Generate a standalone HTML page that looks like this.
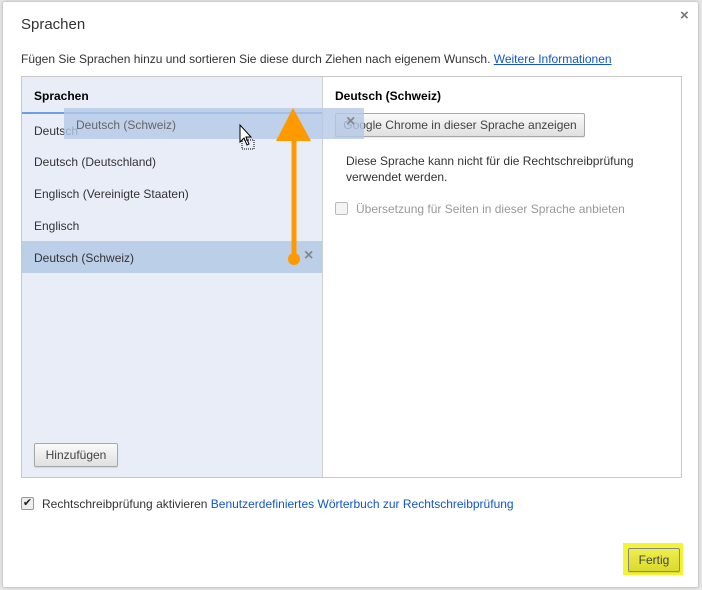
<!DOCTYPE html>
<html><head><meta charset="utf-8"><style>
body{margin:0;width:702px;height:590px;background:#e6e6e6;font-family:"Liberation Sans",sans-serif;font-size:12px;color:#333;position:relative;overflow:hidden}
.dlg{position:absolute;left:3px;top:2px;width:695px;height:585px;background:#fff;border-radius:2px;box-shadow:0 0 3px rgba(0,0,0,.3)}
.a{position:absolute;white-space:nowrap}
a{color:#1155cc}
.btn{position:absolute;border:1px solid #a8a8a8;border-radius:2px;background:linear-gradient(#fafafa,#e0e0e0);box-shadow:0 1px 1px rgba(0,0,0,.1);font-size:12px;color:#444;text-align:center}
</style></head><body>
<div class="dlg"></div>
<div class="a" style="left:21px;top:16px;font-size:15px;color:#333">Sprachen</div>
<div class="a" style="left:680px;top:7px;font-size:15px;color:#777;font-weight:bold">×</div>
<div class="a" style="left:21px;top:52px">Fügen Sie Sprachen hinzu und sortieren Sie diese durch Ziehen nach eigenem Wunsch. <a style="text-decoration:underline">Weitere Informationen</a></div>
<div style="position:absolute;left:21px;top:76px;width:659px;height:400px;border:1px solid #c8c8c8;background:#fff"></div>
<div style="position:absolute;left:22px;top:77px;width:300px;height:400px;background:#e8edf8;border-right:1px solid #d0d0d0"></div>
<div class="a" style="left:34px;top:89px;font-weight:bold;color:#000">Sprachen</div>
<div class="a" style="left:34px;top:124px">Deutsch</div>
<div class="a" style="left:34px;top:155px">Deutsch (Deutschland)</div>
<div class="a" style="left:34px;top:187px">Englisch (Vereinigte Staaten)</div>
<div class="a" style="left:34px;top:219px">Englisch</div>
<div style="position:absolute;left:22px;top:241px;width:300px;height:32px;background:#bccfe8"></div>
<div class="a" style="left:34px;top:251px">Deutsch (Schweiz)</div>
<div class="a" style="left:304px;top:247px;font-size:16px;color:#888;font-weight:bold">×</div>
<div style="position:absolute;left:22px;top:112px;width:300px;height:2px;background:#6f9de0"></div>
<div class="a" style="left:335px;top:89px;font-weight:bold;color:#000">Deutsch (Schweiz)</div>
<div class="btn" style="left:335px;top:113px;width:248px;height:22px;line-height:22px">Google Chrome in dieser Sprache anzeigen</div>
<div style="position:absolute;left:64px;top:108px;width:300px;height:31px;background:rgba(180,200,230,.8)"></div>
<div class="a" style="left:76px;top:118px;color:#666">Deutsch (Schweiz)</div>
<div class="a" style="left:346px;top:113px;font-size:16px;color:#888;font-weight:bold">×</div>
<div class="a" style="left:346px;top:153px;line-height:16px">Diese Sprache kann nicht für die Rechtschreibprüfung<br>verwendet werden.</div>
<div style="position:absolute;left:335px;top:202px;width:11px;height:11px;border:1px solid #bbb;border-radius:2px;background:#f4f4f4"></div>
<div class="a" style="left:356px;top:202px;color:#999">Übersetzung für Seiten in dieser Sprache anbieten</div>
<svg style="position:absolute;left:0;top:0" width="702" height="590"><path d="M294 260 L294 140" stroke="#f90" stroke-width="5"/><path d="M276 141 L293 108 L311 141Z" fill="#f90"/><circle cx="294" cy="259" r="6" fill="#f90"/>
<path d="M240 125 L240 142 L244 138 L247 145 L249 144 L246 137 L251 137Z" fill="#fff" stroke="#000" stroke-width="1"/>
<rect x="242" y="140" width="12" height="9" fill="none" stroke="#000" stroke-dasharray="1 1"/></svg>
<div class="btn" style="left:34px;top:443px;width:82px;height:22px;line-height:22px">Hinzufügen</div>
<div style="position:absolute;left:21px;top:497px;width:11px;height:11px;border:1px solid #999;border-radius:2px;background:#eee;font-size:11px;line-height:11px;text-align:center;color:#222">✔</div>
<div class="a" style="left:42px;top:497px">Rechtschreibprüfung aktivieren <span style="color:#1155cc">Benutzerdefiniertes Wörterbuch zur Rechtschreibprüfung</span></div>
<div style="position:absolute;left:623px;top:543px;width:60px;height:32px;background:#f4f432"></div>
<div class="btn" style="left:628px;top:548px;width:50px;height:22px;line-height:22px;background:linear-gradient(#eeee50,#dada2c);border-color:#888">Fertig</div>
</body></html>
